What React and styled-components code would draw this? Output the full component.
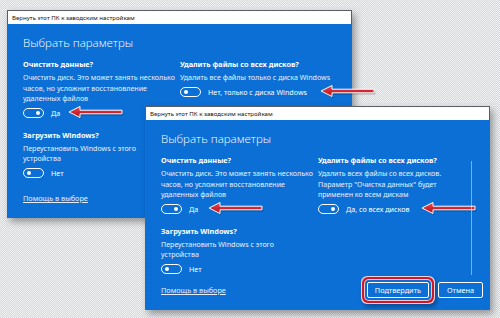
import styled, { createGlobalStyle } from "styled-components";

const BLUE = "#0c6fd6";

const GlobalStyle = createGlobalStyle`
  html, body {
    margin: 0;
    padding: 0;
  }
  body {
    font-family: "Noto Sans", "Open Sans", sans-serif;
  }
`;

const Arrow = ({ gap }) => (
  <ArrowSvg gap={gap} width="58" height="16" viewBox="0 0 58 16">
    <defs>
      <linearGradient id="arrowRed" x1="0" y1="0" x2="0" y2="1">
        <stop offset="0" stopColor="#f0414a" />
        <stop offset="1" stopColor="#b3101c" />
      </linearGradient>
    </defs>
    <polygon
      points="2,7 13,1.5 13,5.2 55,5.2 55,8.8 13,8.8 13,12.5"
      fill="rgba(0,0,0,0.25)"
      transform="translate(1.2,1.6)"
    />
    <polygon
      points="2,7 13,1.5 13,5.2 55,5.2 55,8.8 13,8.8 13,12.5"
      fill="url(#arrowRed)"
      stroke="#fff"
      strokeWidth="1"
      strokeLinejoin="round"
    />
  </ArrowSvg>
);

// desc is given as lines, wrapped the way the dialog wraps them
const Option = ({ title, desc, on, label, arrowGap }) => (
  <OptionBlock>
    <OptionTitle>{title}</OptionTitle>
    <Desc>
      {desc.map((line, i) => (
        <DescLine key={i}>{line}</DescLine>
      ))}
    </Desc>
    <ToggleRow>
      <Toggle on={on}>
        <Knob on={on} />
      </Toggle>
      <ToggleLabel>{label}</ToggleLabel>
      {arrowGap !== undefined && <Arrow gap={arrowGap} />}
    </ToggleRow>
  </OptionBlock>
);

const Dialog = ({ x, y, h, allDisks, scroll }) => (
  <Window style={{ left: x, top: y, height: h }}>
    <TitleBar>Вернуть этот ПК к заводским настройкам</TitleBar>
    <Body>
      <Heading>Выбрать параметры</Heading>
      <Columns>
        <Column>
          <Option
            title="Очистить данные?"
            desc={[
              "Очистить диск. Это может занять несколько",
              "часов, но усложнит восстановление",
              "удаленных файлов",
            ]}
            on
            label="Да"
            arrowGap={allDisks ? 9 : 7}
          />
          <Option
            title="Загрузить Windows?"
            desc={["Переустановить Windows с этого", "устройства"]}
            label="Нет"
          />
        </Column>
        <Column>
          {allDisks ? (
            <Option
              title="Удалить файлы со всех дисков?"
              desc={[
                "Удалить всех файлы со всех дисков.",
                'Параметр "Очистка данных" будет',
                "применен ко всем дискам",
              ]}
              on
              label="Да, со всех дисков"
              arrowGap={11}
            />
          ) : (
            <Option
              title="Удалить файлы со всех дисков?"
              desc={["Удалить все файлы только с диска Windows"]}
              label="Нет, только с диска Windows"
              arrowGap={12}
            />
          )}
        </Column>
        {scroll && <ScrollTrack />}
      </Columns>
      <Footer>
        <HelpLink>Помощь в выборе</HelpLink>
        <Buttons>
          <Button marked>Подтвердить</Button>
          <Button>Отмена</Button>
        </Buttons>
      </Footer>
    </Body>
  </Window>
);

const App = () => (
  <>
    <GlobalStyle />
    <Desktop>
      <Dialog x={7} y={10} h={208} />
      <Dialog x={145} y={106} h={204} allDisks scroll />
    </Desktop>
  </>
);

const Desktop = styled.div`
  position: relative;
  width: 500px;
  height: 318px;
  overflow: hidden;
  background: repeating-conic-gradient(#d6d9dd 0 25%, #eef0f2 0 50%) 0 0 / 2px 2px;
`;

const Window = styled.div`
  position: absolute;
  width: 345px;
  display: flex;
  flex-direction: column;
  border: 1px solid #5a5d62;
  box-shadow: 3px 4px 7px rgba(0, 0, 0, 0.35);
  box-sizing: border-box;
`;

const TitleBar = styled.div`
  height: 13px;
  padding: 0 4px;
  display: flex;
  align-items: center;
  background: #fff;
  color: #111;
  font-size: 6.1px;
  white-space: nowrap;
`;

const Body = styled.div`
  flex: 1;
  display: flex;
  flex-direction: column;
  background: ${BLUE};
  color: #fff;
  padding: 11px 6px 11px 15px;
  min-height: 0;
`;

const Heading = styled.h1`
  margin: 0 0 8px;
  font-family: "Open Sans", "Noto Sans", sans-serif;
  font-weight: 300;
  font-size: 11.5px;
  line-height: 16px;
`;

const Columns = styled.div`
  position: relative;
  display: grid;
  grid-template-columns: 157px 1fr;
`;

const Column = styled.div`
  display: flex;
  flex-direction: column;
  gap: 12px;
`;

const OptionBlock = styled.div`
  display: flex;
  flex-direction: column;
`;

const OptionTitle = styled.div`
  font-weight: 700;
  font-size: 7.3px;
  line-height: 10px;
  margin-bottom: 3px;
  white-space: nowrap;
`;

const Desc = styled.div`
  display: flex;
  flex-direction: column;
  font-size: 7.1px;
  line-height: 10.5px;
  color: #e8f1fb;
`;

const DescLine = styled.span`
  white-space: nowrap;
`;

const ToggleRow = styled.div`
  display: flex;
  align-items: center;
  margin-top: 4px;
  height: 10px;
  white-space: nowrap;
`;

const Toggle = styled.span`
  position: relative;
  width: 21px;
  height: 10px;
  box-sizing: border-box;
  border: 1px solid #fff;
  border-radius: 6px;
  flex-shrink: 0;
`;

const Knob = styled.span`
  position: absolute;
  top: 2px;
  left: ${(p) => (p.on ? "12px" : "3px")};
  width: 4px;
  height: 4px;
  border-radius: 50%;
  background: #fff;
`;

const ToggleLabel = styled.span`
  margin-left: 7px;
  font-size: 7.15px;
`;

const ArrowSvg = styled.svg`
  margin-left: ${(p) => p.gap}px;
  flex-shrink: 0;
  overflow: visible;
`;

const ScrollTrack = styled.div`
  position: absolute;
  right: 11px;
  top: 6px;
  height: 114px;
  width: 1px;
  background: rgba(255, 255, 255, 0.45);
`;

const Footer = styled.div`
  margin-top: auto;
  display: flex;
  align-items: center;
  justify-content: space-between;
`;

const HelpLink = styled.a`
  font-size: 7.3px;
  color: #e4eefa;
  text-decoration: underline;
`;

const Buttons = styled.div`
  display: flex;
  gap: 9px;
`;

const Button = styled.button`
  height: 16px;
  padding: 0 7px;
  min-width: 45px;
  border: 1px solid #fff;
  border-radius: 2px;
  background: ${BLUE};
  color: #fff;
  font-family: "Noto Sans", sans-serif;
  font-size: 7.3px;
  box-shadow: ${(p) =>
    p.marked
      ? `0 0 0 2px ${BLUE}, 0 0 0 3px #f6c6cc, 0 0 0 5px #c81a2c, 0 0 0 6px #f3d4d6, 2px 3px 4px 6px rgba(0,0,0,0.3)`
      : "none"};
`;

export default App;
